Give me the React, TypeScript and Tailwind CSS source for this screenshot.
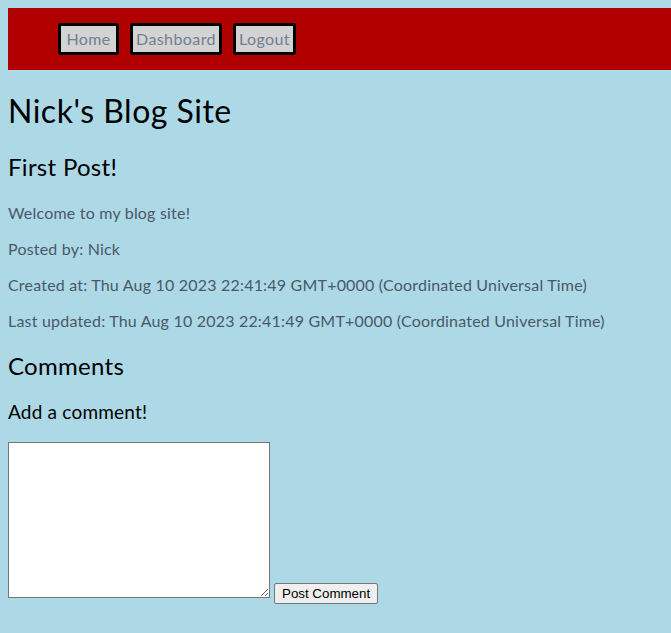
import React from "react";

export default function App() {
  const font = { fontFamily: "Lato, 'Noto Sans', sans-serif" } as const;
  const navs: [string, string][] = [
    ["Home", "w-[61px]"],
    ["Dashboard", "w-[92px]"],
    ["Logout", "w-[63px]"],
  ];
  return (
    <div className="min-h-[633px] bg-[#add8e6] p-2" style={font}>
      <nav className="flex h-[62px] items-center gap-[11px] bg-[#b00000] pl-[50px] w-[663px]">
        {navs.map(([t, w]) => (
          <button
            key={t}
            className={`${w} h-[32px] rounded-[3px] border-[3px] border-black bg-[#d3d3d3] text-[16px] leading-none tracking-[0.4px] text-[#708090]`}
          >
            {t}
          </button>
        ))}
      </nav>
      <h1 className="mt-[22px] text-[32px] leading-[38px] tracking-[0.5px] text-black">Nick's Blog Site</h1>
      <h2 className="mt-[23px] text-[24px] leading-[28px] tracking-[0.3px] text-black">First Post!</h2>
      <div className="text-[16px] leading-[20px] tracking-[0.2px] text-[#4a5866]">
        <p className="mt-[22px]">Welcome to my blog site!</p>
        <p className="mt-[16px]">Posted by: Nick</p>
        <p className="mt-[16px]">Created at: Thu Aug 10 2023 22:41:49 GMT+0000 (Coordinated Universal Time)</p>
        <p className="mt-[16px]">Last updated: Thu Aug 10 2023 22:41:49 GMT+0000 (Coordinated Universal Time)</p>
      </div>
      <h2 className="mt-[21px] text-[24px] leading-[28px] tracking-[0.3px] text-black">Comments</h2>
      <h3 className="mt-[21px] text-[19px] leading-[22px] tracking-[0.2px] text-black">Add a comment!</h3>
      <div className="mt-[19px] flex items-end gap-[4px]">
        <textarea className="h-[156px] w-[262px] resize border border-[#767676] bg-white" />
        <button
          className="mb-[-6px] h-[21px] rounded-[2px] border border-[#767676] bg-[#efefef] px-[7px] text-[13.33px] leading-none text-black"
          style={{ fontFamily: "'Liberation Sans', Arial, sans-serif" }}
        >
          Post Comment
        </button>
      </div>
    </div>
  );
}
